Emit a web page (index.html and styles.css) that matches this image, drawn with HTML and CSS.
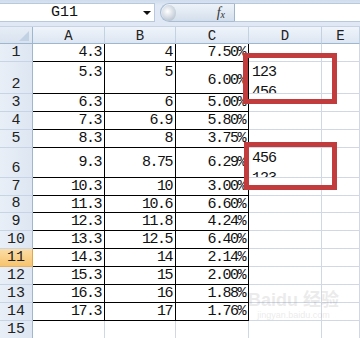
FILE: index.html
```html
<!DOCTYPE html>
<html>
<head>
<meta charset="utf-8">
<link rel="stylesheet" href="styles.css">
</head>
<body>
<div class="app">
  <div class="fbar">
    <div class="namebox"><span class="name">G11</span><span class="arrow"></span></div>
    <div class="fxbtn"><span class="knob"></span><span class="fx">f<sub>x</sub></span></div>
    <div class="finput"></div>
  </div>
  <div class="sheet">
    <div class="corner"><span class="tri"></span></div>
    <div class="ch">A</div><div class="ch">B</div><div class="ch">C</div><div class="ch">D</div><div class="ch">E</div>

    <div class="rh">1</div><div class="c b n">4.3</div><div class="c b n">4</div><div class="c b n">7.50%</div><div class="c"></div><div class="c"></div>
    <div class="rh">2</div><div class="c b n top">5.3</div><div class="c b n top">5</div><div class="c b n mid">6.00%</div><div class="c t wrap"><span>123<br>456</span></div><div class="c"></div>
    <div class="rh">3</div><div class="c b n">6.3</div><div class="c b n">6</div><div class="c b n">5.00%</div><div class="c"></div><div class="c"></div>
    <div class="rh">4</div><div class="c b n">7.3</div><div class="c b n">6.9</div><div class="c b n">5.80%</div><div class="c"></div><div class="c"></div>
    <div class="rh">5</div><div class="c b n">8.3</div><div class="c b n">8</div><div class="c b n">3.75%</div><div class="c"></div><div class="c"></div>
    <div class="rh">6</div><div class="c b n">9.3</div><div class="c b n">8.75</div><div class="c b n">6.29%</div><div class="c t wrap wrap6"><span>456<br>123</span></div><div class="c"></div>
    <div class="rh">7</div><div class="c b n">10.3</div><div class="c b n">10</div><div class="c b n">3.00%</div><div class="c"></div><div class="c"></div>
    <div class="rh">8</div><div class="c b n">11.3</div><div class="c b n">10.6</div><div class="c b n">6.60%</div><div class="c"></div><div class="c"></div>
    <div class="rh">9</div><div class="c b n">12.3</div><div class="c b n">11.8</div><div class="c b n">4.24%</div><div class="c"></div><div class="c"></div>
    <div class="rh">10</div><div class="c b n">13.3</div><div class="c b n">12.5</div><div class="c b n">6.40%</div><div class="c"></div><div class="c"></div>
    <div class="rh sel">11</div><div class="c b n">14.3</div><div class="c b n">14</div><div class="c b n">2.14%</div><div class="c"></div><div class="c"></div>
    <div class="rh">12</div><div class="c b n">15.3</div><div class="c b n">15</div><div class="c b n">2.00%</div><div class="c"></div><div class="c"></div>
    <div class="rh">13</div><div class="c b n">16.3</div><div class="c b n">16</div><div class="c b n">1.88%</div><div class="c"></div><div class="c"></div>
    <div class="rh">14</div><div class="c b n">17.3</div><div class="c b n">17</div><div class="c b n">1.76%</div><div class="c"></div><div class="c"></div>
    <div class="rh">15</div><div class="c"></div><div class="c"></div><div class="c"></div><div class="c"></div><div class="c"></div>
  </div>
  <div class="mark mark1"></div>
  <div class="mark mark2"></div>
  <div class="wm"><span class="wm-logo">Bai<b>du</b> 经验</span><span class="wm-url">jingyan.baidu.com</span></div>
</div>
</body>
</html>
```

FILE: styles.css
```css
html, body {
  margin: 0;
  padding: 0;
  background: #ffffff;
}
.app {
  position: relative;
  width: 360px;
  height: 338px;
  overflow: hidden;
  font-family: "Liberation Mono", "DejaVu Sans Mono", monospace;
  font-size: 15px;
  color: #111;
}
.fbar {
  display: flex;
  align-items: stretch;
  height: 27px;
  box-sizing: border-box;
  padding: 3px 0 4px 0;
  background: linear-gradient(#cfdcec, #dfe8f4 20%, #dfe8f4);
  border-bottom: 1px solid #c5d3e4;
}
.namebox {
  width: 155px;
  background: #fff;
  border: 1px solid #b9c9dd;
  border-left: none;
  box-sizing: border-box;
  display: flex;
  align-items: center;
  position: relative;
}
.name {
  flex: 1;
  text-align: center;
  padding-right: 14px;
  color: #111;
}
.arrow {
  width: 0;
  height: 0;
  border-left: 4px solid transparent;
  border-right: 4px solid transparent;
  border-top: 4px solid #111;
  margin-right: 3px;
}
.fxbtn {
  margin-left: 5px;
  width: 75px;
  border-radius: 10px 0 0 10px;
  background: linear-gradient(#eef3f9, #d4dfec);
  border: 1px solid #a9bcd4;
  border-right: 1px solid #9fb4cd;
  box-sizing: border-box;
  display: flex;
  align-items: center;
  justify-content: space-between;
}
.knob {
  width: 14px;
  height: 16px;
  border-radius: 50%;
  background: radial-gradient(circle at 40% 40%, #ffffff, #c9d2dc 60%, #a8b3c0);
  margin-left: 1px;
}
.fx {
  font-family: "Liberation Serif", serif;
  font-style: italic;
  font-size: 14px;
  color: #333;
  margin-right: 9px;
}
.fx sub {
  font-size: 10px;
  vertical-align: -1px;
}
.finput {
  flex: 1;
  background: #fff;
  border: 1px solid #b9c9dd;
  border-left: none;
  border-right: none;
}
.sheet {
  display: grid;
  grid-template-columns: 33px 72px 71px 73px 73px 38px;
  grid-template-rows: 17px 18px 32px 18px 18px 18px 30px 18px 17px 18px 18px 18px 18px 18px 18px 18px;
}
.corner {
  background: linear-gradient(#e6edf6, #d9e3ef);
  border-right: 1px solid #9eb6ce;
  border-bottom: 1px solid #9eb6ce;
  box-sizing: border-box;
  position: relative;
}
.tri {
  position: absolute;
  right: 3px;
  bottom: 2px;
  width: 0;
  height: 0;
  border-left: 10px solid transparent;
  border-bottom: 10px solid #c2d2e5;
}
.ch {
  background: linear-gradient(#f0f4fa, #dce6f2);
  border-right: 1px solid #c3d2e3;
  border-bottom: 1px solid #9eb6ce;
  box-sizing: border-box;
  display: flex;
  align-items: center;
  justify-content: center;
  font-size: 14px;
  color: #222;
  padding-top: 1px;
}
.rh {
  background: linear-gradient(90deg, #e9eff7, #dde6f2);
  border-right: 1px solid #9eb6ce;
  border-bottom: 1px solid #c5d5e6;
  box-sizing: border-box;
  display: flex;
  align-items: flex-end;
  justify-content: center;
  line-height: 17px;
  color: #222;
}
.rh.sel {
  background: linear-gradient(#fbdda6, #f7c46e);
  border-right-color: #e0a84e;
  border-bottom-color: #e3b268;
}
.c {
  border-right: 1px solid #d0d7e5;
  border-bottom: 1px solid #d0d7e5;
  box-sizing: border-box;
  display: flex;
  align-items: center;
  overflow: hidden;
  line-height: 17px;
}
.c.b {
  border-right-color: #000;
  border-bottom-color: #000;
}
.n {
  justify-content: flex-end;
  padding-right: 3px;
  letter-spacing: -1.5px;
}
.c.top {
  align-items: flex-start;
  padding-top: 2px;
}
.c.mid {
  align-items: flex-start;
  padding-top: 10px;
}
.t {
  padding-left: 3px;
  letter-spacing: -1px;
}
.c.wrap {
  align-items: flex-start;
  padding-top: 1px;
  line-height: 20px;
}
.c.wrap6 {
  line-height: 20px;
  padding-top: 1px;
}
.mark {
  position: absolute;
  border: 5px solid #c23c3d;
  box-sizing: border-box;
}
.mark1 {
  left: 243px;
  top: 53px;
  width: 94px;
  height: 51px;
}
.mark2 {
  left: 244px;
  top: 142px;
  width: 93px;
  height: 48px;
}
.wm {
  position: absolute;
  left: 248px;
  top: 291px;
  display: flex;
  flex-direction: column;
  align-items: center;
  opacity: 0.14;
  color: #777;
  pointer-events: none;
  font-family: "Liberation Sans", "Noto Sans CJK SC", sans-serif;
}
.wm-logo {
  font-size: 18px;
  font-weight: bold;
  line-height: 19px;
}
.wm-logo b {
  font-weight: bold;
}
.wm-url {
  font-size: 9px;
  line-height: 11px;
}
```
